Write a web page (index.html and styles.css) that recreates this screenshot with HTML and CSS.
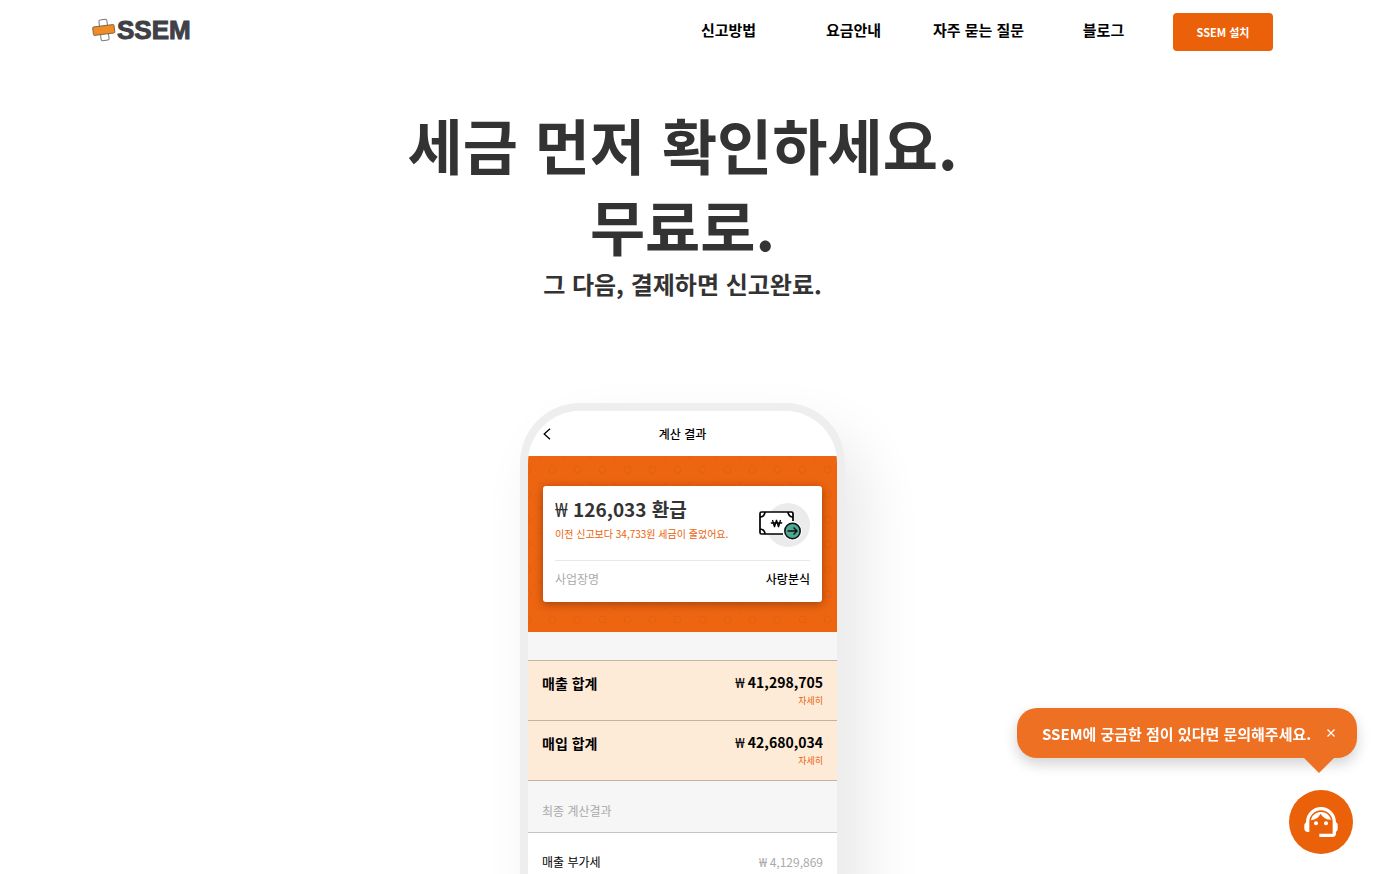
FILE: index.html
```html
<!DOCTYPE html>
<html lang="ko">
<head>
<meta charset="utf-8">
<title>SSEM</title>
<meta name="viewport" content="width=device-width, initial-scale=1">
<link rel="stylesheet" href="styles.css">
</head>
<body>
<div class="page">
  <header class="header">
    <a class="logo" href="#">
      <svg class="logo-mark" viewBox="0 0 24 24" aria-hidden="true">
        <g transform="rotate(-7 12 12)">
          <rect x="8" y="1.500" width="8" height="21" rx="1.500" fill="#fff" stroke="#777" stroke-width="1"/>
          <rect x="1" y="7.700" width="21.500" height="8.500" rx="1" fill="#f08c28" stroke="#7d6046" stroke-width=".9"/>
        </g>
      </svg>
      <span>SSEM</span>
    </a>
    <nav class="nav">
      <a href="#">신고방법</a>
      <a href="#">요금안내</a>
      <a href="#">자주 묻는 질문</a>
      <a href="#">블로그</a>
    </nav>
    <button class="install" type="button">SSEM 설치</button>
  </header>

  <main class="hero">
    <h1>세금 먼저 확인하세요.<br>무료로.</h1>
    <p class="lead">그 다음, 결제하면 신고완료.</p>

    <section class="phone">
      <div class="screen">
        <div class="bar">
          <button class="back" type="button" aria-label="뒤로">
            <svg viewBox="0 0 8 12" aria-hidden="true"><path d="M7 .7 1.200 6 7 11.300" fill="none" stroke="#000" stroke-width="1.300"/></svg>
          </button>
          <h2>계산 결과</h2>
        </div>
        <div class="banner">
          <svg class="pattern" aria-hidden="true">
            <defs>
              <pattern id="dots" x="12" y="1" width="25" height="25" patternUnits="userSpaceOnUse">
                <circle cx="12.500" cy="12.500" r="3.500" fill="none" stroke="#d95c0c" stroke-opacity=".6"/>
                <path d="M-2 0l2 2 2-2M23 0l2 2 2-2" fill="none" stroke="#d95c0c" stroke-opacity=".5"/>
              </pattern>
            </defs>
            <rect width="100%" height="100%" fill="url(#dots)"/>
          </svg>
          <div class="card">
            <div class="refund">
              <div>
                <strong class="amount"><span class="won">₩</span> 126,033 환급</strong>
                <p class="note">이전 신고보다 34,733원 세금이 줄었어요.</p>
              </div>
              <svg class="money" viewBox="0 0 52 46" aria-hidden="true">
                <circle cx="30" cy="23" r="22" fill="#ebebeb"/>
                <rect x="2" y="10" width="33" height="22" rx="1.500" fill="#fff"/>
                <path d="M35 19v-7.500a1.500 1.500 0 0 0-1.500-1.500h-30A1.500 1.500 0 0 0 2 11.500v19A1.500 1.500 0 0 0 3.500 32H25" fill="none" stroke="#000" stroke-width="1.700"/>
                <path d="M7 10a5 5 0 0 1-5 5M30 10a5 5 0 0 0 5 5M2 27a5 5 0 0 1 5 5" fill="none" stroke="#000" stroke-width="1.700"/>
                <path d="M14.500 18l2 7 2-7 2 7 2-7M12.800 21h11.400" fill="none" stroke="#000" stroke-width="1.300" stroke-linejoin="bevel"/>
                <circle cx="34.500" cy="29" r="9.500" fill="#fff"/>
                <circle cx="34.500" cy="29" r="7.700" fill="#4fa893" stroke="#111" stroke-width="1.600"/>
                <path d="M29.500 29h9M35.500 25.500l3.500 3.500-3.500 3.500" fill="none" stroke="#111" stroke-width="1.400"/>
              </svg>
            </div>
            <div class="shop"><span>사업장명</span><b>사랑분식</b></div>
          </div>
        </div>
        <div class="gap"></div>
        <div class="total">
          <strong>매출 합계</strong>
          <div class="sum"><strong><span class="won">₩</span> 41,298,705</strong><a href="#">자세히</a></div>
        </div>
        <div class="total">
          <strong>매입 합계</strong>
          <div class="sum"><strong><span class="won">₩</span> 42,680,034</strong><a href="#">자세히</a></div>
        </div>
        <h3 class="caption">최종 계산결과</h3>
        <div class="line"><span>매출 부가세</span><span class="muted"><span class="won">₩</span> 4,129,869</span></div>
      </div>
    </section>
  </main>
</div>

<aside class="support">
  <div class="bubble">
    <span>SSEM에 궁금한 점이 있다면 문의해주세요.</span>
    <button class="close" type="button" aria-label="닫기">
      <svg viewBox="0 0 8 8" aria-hidden="true"><path d="M.5.5l7 7M7.500.5l-7 7" stroke="#fff" stroke-width="1.300"/></svg>
    </button>
  </div>
  <button class="agent" type="button" aria-label="상담">
    <svg viewBox="0 0 24 24" fill="#fff" aria-hidden="true">
      <path d="M21 12.220C21 6.730 16.740 3 12 3c-4.690 0-9 3.650-9 9.280-.6.340-1 .980-1 1.720v2c0 1.100.9 2 2 2h1v-6.100c0-3.870 3.130-7 7-7s7 3.130 7 7V19h-8v2h8c1.100 0 2-.9 2-2v-1.220c.590-.310 1-.920 1-1.640v-2.300c0-.7-.410-1.310-1-1.620z"/>
      <circle cx="9" cy="12.800" r="1.200"/>
      <circle cx="15" cy="12.800" r="1.200"/>
      <path d="M11.600 6C8.800 6.200 6.400 8 6 11c2.800-.5 4.700-1.800 5.700-4 1.300 2.300 3.600 3.600 6.300 3.700C17.400 8 15 5.900 11.600 6z"/>
    </svg>
  </button>
</aside>
</body>
</html>
```
FILE: styles.css
```css
* {
  box-sizing: border-box;
}

body {
  margin: 0;
  background: #fff;
  color: #000;
  font-family: "Noto Sans CJK KR", "Noto Sans", sans-serif;
}

a {
  color: inherit;
  text-decoration: none;
}

button {
  padding: 0;
  border: 0;
  background: none;
  font-family: inherit;
  cursor: pointer;
}

h1, h2, h3, p {
  margin: 0;
}

svg {
  display: block;
}

.page {
  height: 100vh;
  overflow: hidden;
  padding-right: 11px;
}

.header {
  display: flex;
  align-items: center;
  max-width: 1181px;
  height: 64px;
  margin: 0 auto;
}

.logo {
  display: flex;
  align-items: center;
  gap: 1px;
  margin-right: auto;
  padding-bottom: 4px;
  color: #3f4147;
  font: bold 26px/30px "Liberation Sans", Arial, sans-serif;
  -webkit-text-stroke: 1px #3f4147;
}

.logo-mark {
  width: 24px;
  height: 24px;
}

.nav {
  display: flex;
  padding-bottom: 4px;
  margin-right: 7px;
}

.nav a {
  width: 125px;
  text-align: center;
  font-size: 15px;
  font-weight: 700;
  line-height: 24px;
}

.install {
  width: 100px;
  height: 38px;
  border-radius: 4px;
  background: #eb6109;
  color: #fff;
  font-size: 11px;
  font-weight: 700;
}

.hero {
  display: flex;
  flex-direction: column;
  align-items: center;
  padding-top: 39px;
  color: #333;
  text-align: center;
}

.hero h1 {
  font-size: 60px;
  font-weight: 700;
  line-height: 81px;
}

.lead {
  font-size: 24px;
  font-weight: 700;
  line-height: 38px;
}

.phone {
  width: 325px;
  margin-top: 100px;
  border: 8px solid #eee;
  border-bottom: 0;
  border-radius: 60px 60px 0 0;
  box-shadow: 20px 30px 60px rgba(0, 0, 0, .09);
  color: #000;
  text-align: left;
}

.screen {
  overflow: hidden;
  border-radius: 52px 52px 0 0;
  background: #fff;
}

.bar {
  display: grid;
  grid-template-columns: 8px 1fr 8px;
  align-items: center;
  height: 45px;
  padding: 0 15px;
}

.back svg {
  width: 8px;
  height: 12px;
}

.bar h2 {
  text-align: center;
  font-size: 12px;
  font-weight: 500;
}

.banner {
  position: relative;
  padding: 30px 15px;
  background: #ed6511;
}

.pattern {
  position: absolute;
  inset: 0;
  width: 100%;
  height: 100%;
}

.card {
  position: relative;
  height: 116px;
  padding: 9px 12px 0;
  border-radius: 3px;
  background: #fff;
  box-shadow: 0 2px 8px rgba(90, 30, 0, .5);
}

.refund {
  display: flex;
  justify-content: space-between;
  height: 66px;
  border-bottom: 1px solid #e8e8e8;
}

.won {
  font-family: "Noto Sans", sans-serif;
  font-weight: 400;
}

.amount {
  display: block;
  color: #333;
  font-size: 19px;
  line-height: 28px;
}

.note {
  color: #eb6109;
  font-size: 10px;
  line-height: 20px;
}

.money {
  flex: none;
  width: 52px;
  height: 46px;
  margin-top: 7px;
}

.shop {
  display: flex;
  justify-content: space-between;
  padding-top: 8px;
  font-size: 12px;
  line-height: 20px;
}

.shop span,
.muted {
  color: #aaa;
}

.shop b {
  font-weight: 500;
}

.gap {
  height: 28px;
  background: #f6f6f6;
}

.total {
  display: flex;
  justify-content: space-between;
  height: 60px;
  padding: 11px 14px 0;
  border-top: 1px solid #c3b2a2;
  background: #fdebd7;
  font-size: 14px;
  line-height: 22px;
}

.sum {
  display: flex;
  flex-direction: column;
  align-items: flex-end;
}

.sum strong {
  line-height: 20px;
}

.sum a {
  color: #eb6109;
  font-size: 9px;
  line-height: 16px;
}

.caption {
  height: 52px;
  padding: 20px 14px 0;
  border-top: 1px solid #c3b2a2;
  background: #f6f6f6;
  color: #aaa;
  font-size: 12px;
  font-weight: 400;
  line-height: 20px;
}

.line {
  display: flex;
  justify-content: space-between;
  padding: 19px 14px 40px;
  border-top: 1px solid #c4c4c4;
  font-size: 12px;
  line-height: 20px;
}

.support {
  position: fixed;
  right: 19px;
  bottom: 20px;
  display: flex;
  flex-direction: column;
  align-items: flex-end;
  gap: 32px;
}

.bubble {
  position: relative;
  display: flex;
  align-items: center;
  justify-content: space-between;
  width: 340px;
  height: 50px;
  padding: 0 22px 0 25px;
  border-radius: 20px;
  background: #ed7023;
  box-shadow: 0 6px 14px rgba(0, 0, 0, .18);
  color: #fff;
  font-size: 15px;
  font-weight: 700;
  white-space: nowrap;
}

.bubble::after {
  content: "";
  position: absolute;
  top: 100%;
  right: 23px;
  border: 15px solid transparent;
  border-top-color: #ed7023;
  border-bottom: 0;
}

.close svg {
  width: 8px;
  height: 8px;
}

.agent {
  display: grid;
  place-items: center;
  width: 64px;
  height: 64px;
  margin-right: 4px;
  border-radius: 50%;
  background: #eb6109;
}

.agent svg {
  width: 40px;
  height: 40px;
}
```
